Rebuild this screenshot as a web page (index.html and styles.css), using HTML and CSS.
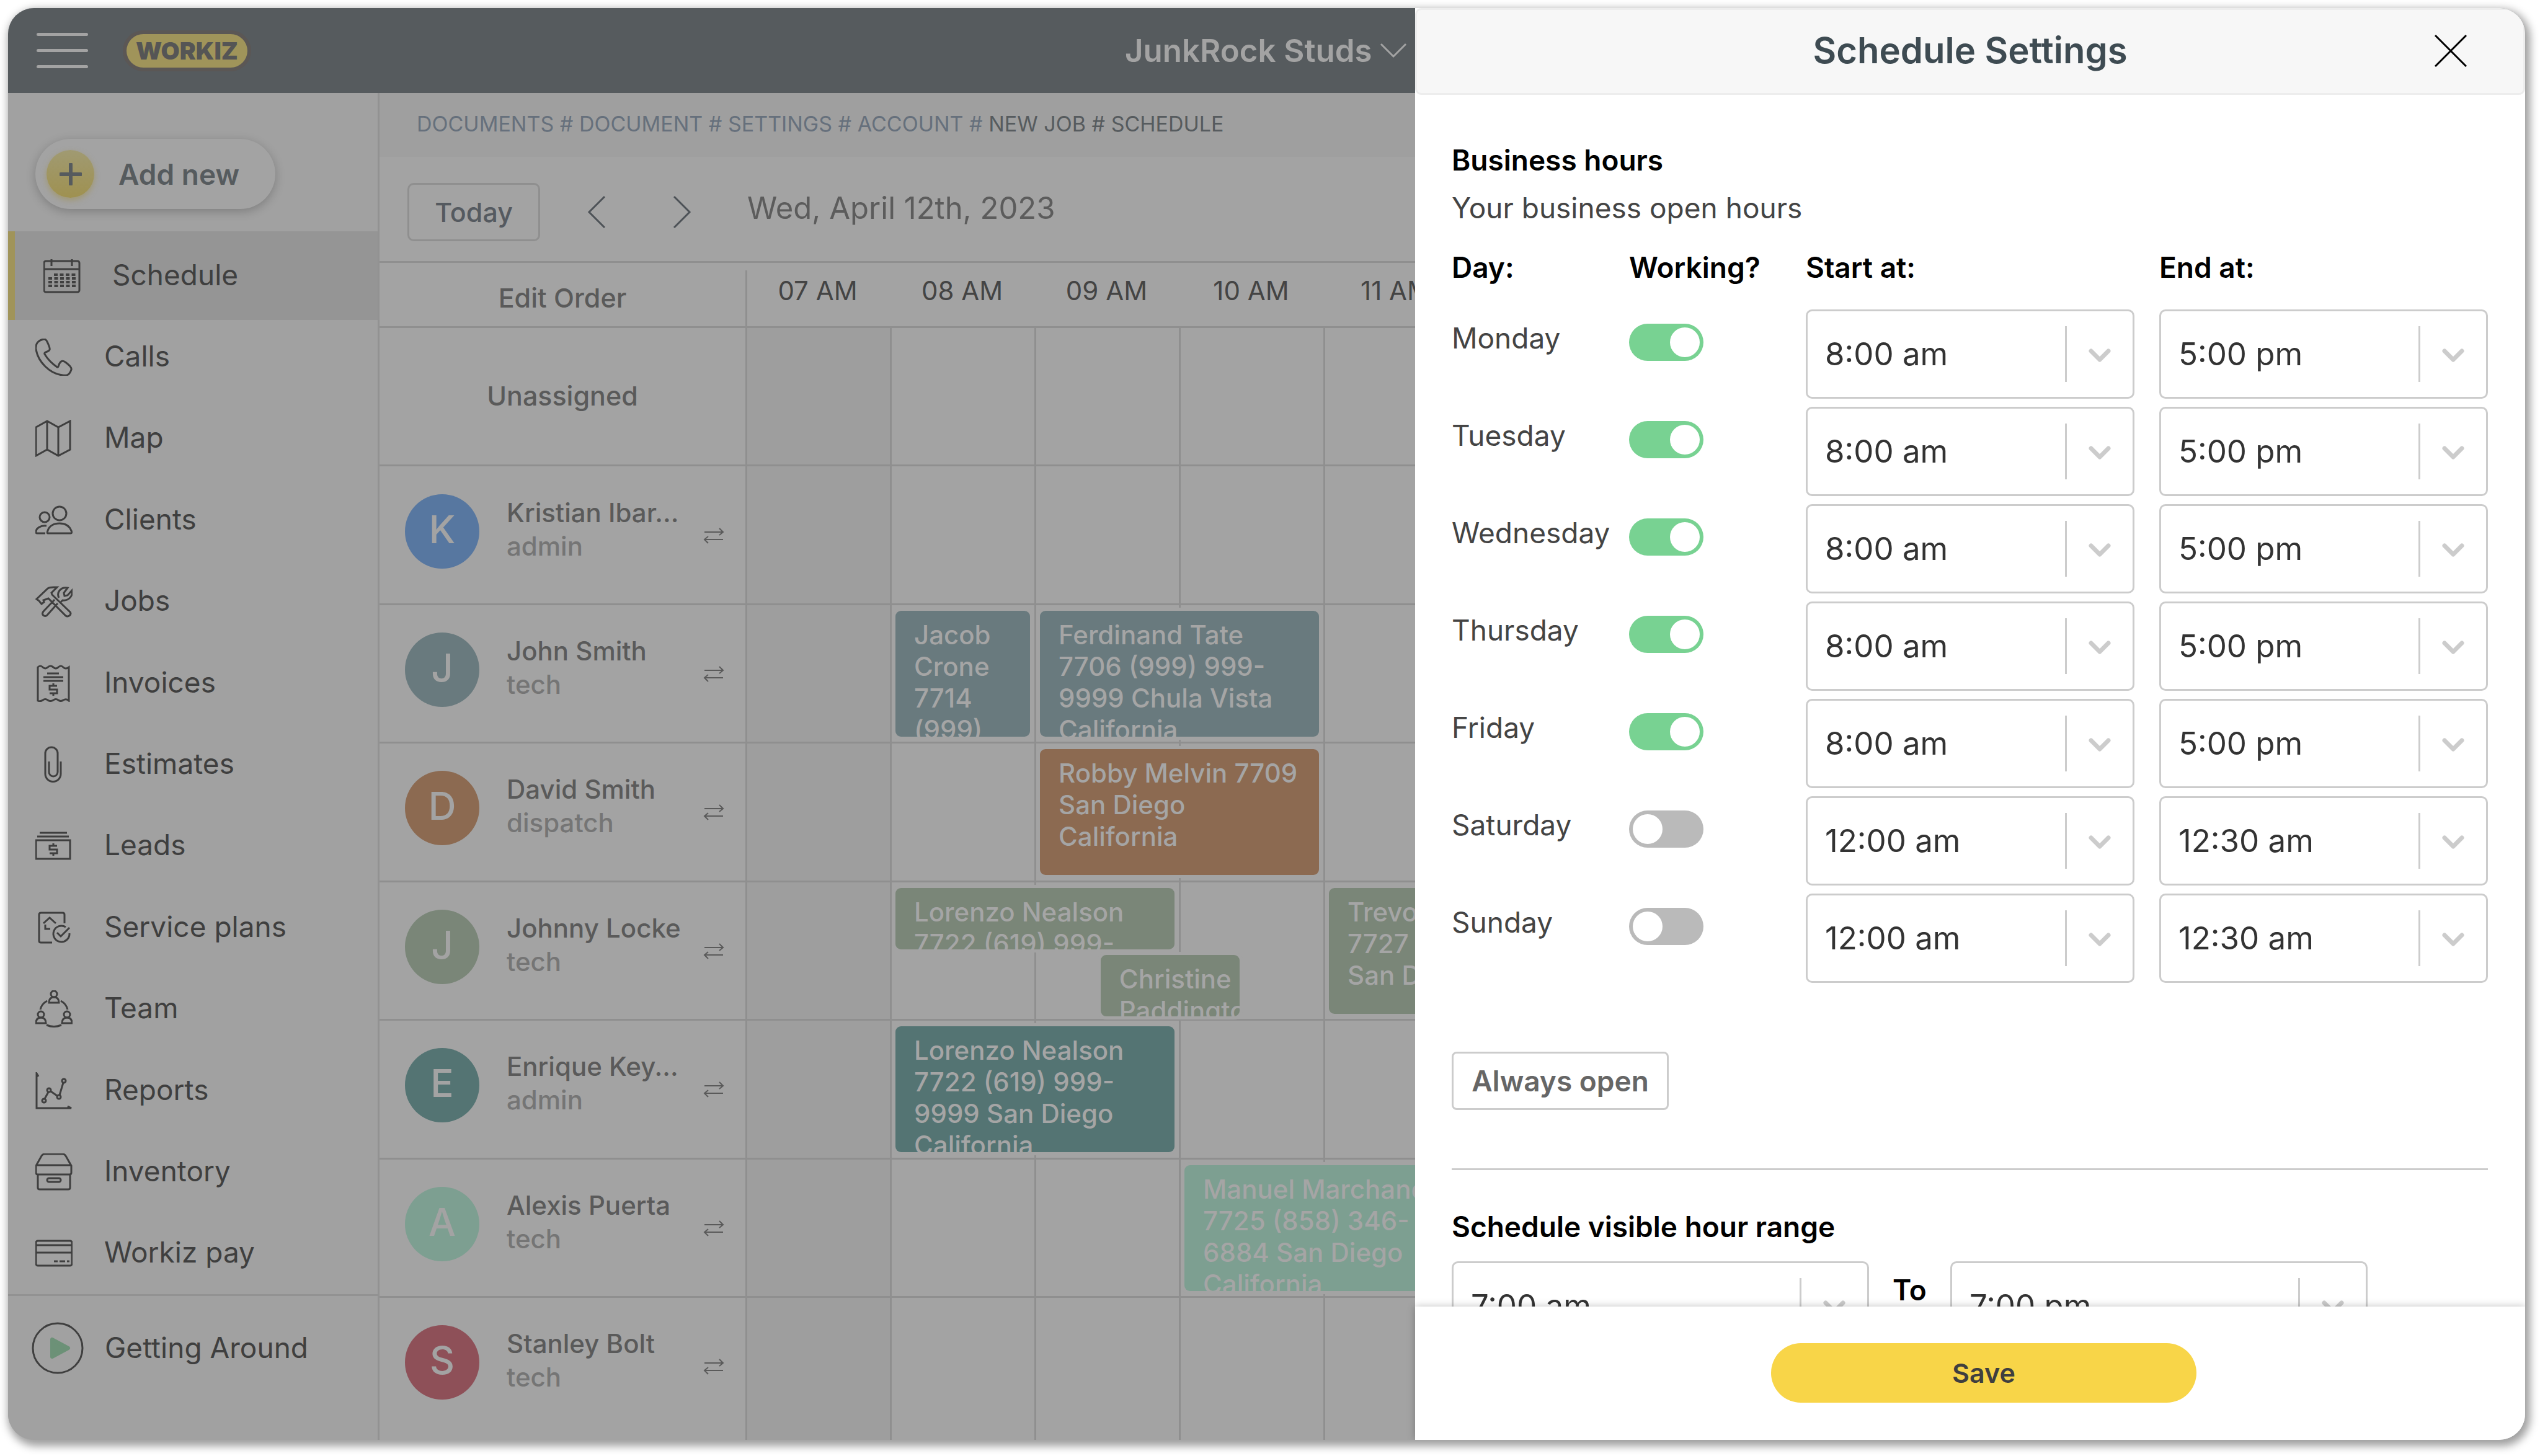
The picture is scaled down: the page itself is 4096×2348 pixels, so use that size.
FILE: index.html
```html
<!DOCTYPE html>
<html lang="en">
<head>
<meta charset="utf-8">
<title>Workiz – Schedule Settings</title>
<link rel="stylesheet" href="styles.css">
</head>
<body>
<svg class="sprite" aria-hidden="true">
  <symbol id="i-chevron" viewBox="0 0 36 24"><path d="M4 5l14 14L32 5" fill="none" stroke="currentColor" stroke-width="7" stroke-linecap="round" stroke-linejoin="round"/></symbol>
  <symbol id="i-swap" viewBox="0 0 34 28"><path d="M2 8h30M26 2l6 6-6 5M32 20H2M8 15l-6 5 6 6" fill="none" stroke="currentColor" stroke-width="2"/></symbol>
  <symbol id="i-dollar" viewBox="0 0 18 22"><path d="M15 5H3v6h12v6H3M9 1v4M9 17v4" fill="none" stroke="currentColor" stroke-width="3"/></symbol>
</svg>

<div class="window">
  <header class="topbar">
    <button class="burger" aria-label="Menu"><span></span><span></span><span></span></button>
    <span class="logo">WORKIZ</span>
    <button class="account">JunkRock Studs
      <svg width="44" height="26" viewBox="0 0 44 26"><path d="M2 2l20 20L42 2" fill="none" stroke="currentColor" stroke-width="3"/></svg>
    </button>
  </header>

  <div class="app">
    <aside class="sidebar">
      <button class="add-new"><span class="plus"><svg width="36" height="36" viewBox="0 0 36 36"><path d="M18 2v32M2 18h32" stroke="currentColor" stroke-width="6" stroke-linecap="round"/></svg></span>Add new</button>
      <nav class="nav">
        <a href="#" class="active"><svg viewBox="0 0 60 60"><path d="M4 6h51a3 3 0 0 1 3 3v44a3 3 0 0 1-3 3H4a3 3 0 0 1-3-3V9a3 3 0 0 1 3-3zM1 19h57M13 3v11M46 3v11"/><path d="M17 28h36M8 34h45M8 40h45M8 46h45" stroke-width="4" stroke-dasharray="6 3.5"/></svg>Schedule</a>
        <a href="#"><svg viewBox="0 0 60 60"><path d="M13 1C4 3 0 9 1 17c3 20 22 40 43 42 7 1 11 0 14-9 1-3-2-6-7-10-6-5-9-5-12 0-2 4-2 7-4 6C28 41 19 32 15 25c-1-2 1-3 4-4 5-2 5-4 3-9-3-8-5-12-9-11z"/></svg>Calls</a>
        <a href="#"><svg viewBox="0 0 60 60"><path d="M1 12l18-10 18 10L56 2v46L37 58 19 48 1 58zM19 2v46M37 12v46"/></svg>Map</a>
        <a href="#"><svg viewBox="0 0 60 60"><circle cx="39" cy="19" r="11"/><circle cx="15" cy="25" r="8"/><path d="M20 51h37c2 0 2-2 1-4-3-8-10-12-19-12s-17 4-19 12c-1 2-1 4 0 4zM18 39C8 38 1 43 1 49q0 2 2 2h13"/></svg>Clients</a>
        <a href="#"><svg viewBox="0 0 60 60"><path d="M2 26L20 9c4-3 9-2 15-2l-9 9 1 3 29 28c3 4-3 9-7 6L21 25l-8 3 1 3-4 3-4-5zM31 27L13 46c-4 5 2 10 6 6l17-19M38 24c-4-8 2-18 14-16l-6 8 1 5 5-1 7-8c2 11-7 17-15 16l-3 3"/></svg>Jobs</a>
        <a href="#"><svg viewBox="0 0 60 60"><path d="M4 4q4-4 8 0 4 4 8 0 4-4 9 0 4 4 8 0 4-4 8 0 4 4 9 0v54q-4-4-9-1-4 3-8 0-4-3-8 0-5 3-9 0-4-3-8 0-4 3-8 1zM19 14h19M13 20h32M13 26h32"/><use href="#i-dollar" x="20" y="29" width="18" height="22"/></svg>Invoices</a>
        <a href="#"><svg viewBox="0 0 60 60"><path d="M41 25v20a12 12 0 0 1-25 0V12a10 10 0 0 1 20 0v30a7 7 0 0 1-14 0V25"/></svg>Estimates</a>
        <a href="#"><svg viewBox="0 0 60 60"><path d="M7 9h44M3 15h51M1 21h55v30H1z"/><use href="#i-dollar" x="20" y="25" width="18" height="22"/></svg>Leads</a>
        <a href="#"><svg viewBox="0 0 60 60"><path d="M27 54H9q-3 0-3-3V9q0-3 3-3h35q3 0 3 3v14M13 23l10-9 10 9M16 25v7h8"/><path d="M49 29a13 13 0 1 0 6 10M35 38l6 6 14-14"/></svg>Service plans</a>
        <a href="#"><svg viewBox="0 0 60 60"><circle cx="30" cy="6" r="5"/><path d="M22 20q0-9 8-9t8 9z"/><circle cx="9" cy="39" r="5"/><path d="M1 53q0-9 8-9t8 9z"/><circle cx="51" cy="39" r="5"/><path d="M43 53q0-9 8-9t8 9zM8 31q2-9 11-14M41 17q9 5 11 14M18 56q12 5 24 0"/></svg>Team</a>
        <a href="#"><svg viewBox="0 0 60 60"><path d="M5 7L2 2v56h56l-6-3"/><circle cx="14" cy="46" r="3"/><circle cx="22" cy="29" r="3"/><circle cx="38" cy="40" r="3"/><circle cx="46" cy="14" r="3"/><path d="M15 43l6-11M25 31l10 7M39 37l6-20"/></svg>Reports</a>
        <a href="#"><svg viewBox="0 0 60 60"><path d="M1 20L10 4q2-3 5-3h29q3 0 5 3l9 16v11q0 3-3 3H4q-3 0-3-3zM1 19h57M4 34v21q0 3 3 3h46q3 0 3-3V34"/><rect x="19" y="40" width="22" height="6" rx="3"/></svg>Inventory</a>
        <a href="#"><svg viewBox="0 0 60 60"><rect x="1" y="10" width="58" height="40" rx="3"/><path d="M1 17h58M1 29h58M30 43h6M39 43h9M51 43h4"/></svg>Workiz pay</a>
      </nav>
      <a href="#" class="getting"><svg width="84" height="84" viewBox="0 0 84 84"><circle cx="42" cy="42" r="40" fill="none" stroke="#3f3f3f" stroke-width="3"/><path d="M33 28v28l26-14z" fill="#6c9177" stroke="#6c9177" stroke-width="6" stroke-linejoin="round"/></svg>Getting Around</a>
    </aside>

    <main class="main">
      <nav class="crumbs"><a href="#">DOCUMENTS</a> # <a href="#">DOCUMENT</a> # <a href="#">SETTINGS</a> # <a href="#">ACCOUNT</a> # <span>NEW JOB # SCHEDULE</span></nav>
      <div class="toolbar">
        <button class="today">Today</button>
        <button class="step" aria-label="Previous day"><svg width="30" height="54" viewBox="0 0 30 54"><path d="M28 2L3 27l25 25"/></svg></button>
        <button class="step" aria-label="Next day"><svg width="30" height="54" viewBox="0 0 30 54"><path d="M2 2l25 25L2 52"/></svg></button>
        <h1 class="date">Wed, April 12th, 2023</h1>
      </div>
      <div class="hours">
        <div class="corner">Edit Order</div>
        <span>07 AM</span><span>08 AM</span><span>09 AM</span><span>10 AM</span><span>11 AM</span><span>12 PM</span>
      </div>
      <div class="rows">
        <div class="row"><div class="staff unassigned">Unassigned</div><div class="lane"></div></div>
        <div class="row"><div class="staff"><span class="avatar blue">K</span><div class="who"><b>Kristian Ibar...</b><i>admin</i></div><svg class="swap"><use href="#i-swap"/></svg></div><div class="lane"></div></div>
        <div class="row"><div class="staff"><span class="avatar slate">J</span><div class="who"><b>John Smith</b><i>tech</i></div><svg class="swap"><use href="#i-swap"/></svg></div><div class="lane">
          <div class="job slate" style="--start:1;--span:1">Jacob Crone 7714 (999)</div>
          <div class="job slate" style="--start:2;--span:2">Ferdinand Tate<br>7706 (999) 999-<br>9999 Chula Vista<br>California</div></div></div>
        <div class="row"><div class="staff"><span class="avatar rust">D</span><div class="who"><b>David Smith</b><i>dispatch</i></div><svg class="swap"><use href="#i-swap"/></svg></div><div class="lane">
          <div class="job rust" style="--start:2;--span:2">Robby Melvin 7709<br>San Diego<br>California</div></div></div>
        <div class="row"><div class="staff"><span class="avatar sage">J</span><div class="who"><b>Johnny Locke</b><i>tech</i></div><svg class="swap"><use href="#i-swap"/></svg></div><div class="lane">
          <div class="job sage half" style="--start:1;--span:2">Lorenzo Nealson<br>7722 (619) 999-</div>
          <div class="job sage half lower" style="--start:2.42;--span:1.03">Christine Paddington</div>
          <div class="job sage" style="--start:4;--span:2">Trevor Burke<br>7727 (619) 999-<br>San Diego</div></div></div>
        <div class="row"><div class="staff"><span class="avatar teal">E</span><div class="who"><b>Enrique Key...</b><i>admin</i></div><svg class="swap"><use href="#i-swap"/></svg></div><div class="lane">
          <div class="job teal" style="--start:1;--span:2">Lorenzo Nealson<br>7722 (619) 999-<br>9999 San Diego<br>California</div></div></div>
        <div class="row"><div class="staff"><span class="avatar mint">A</span><div class="who"><b>Alexis Puerta</b><i>tech</i></div><svg class="swap"><use href="#i-swap"/></svg></div><div class="lane">
          <div class="job mint" style="--start:3;--span:2">Manuel Marchand<br>7725 (858) 346-<br>6884 San Diego<br>California</div></div></div>
        <div class="row"><div class="staff"><span class="avatar red">S</span><div class="who"><b>Stanley Bolt</b><i>tech</i></div><svg class="swap"><use href="#i-swap"/></svg></div><div class="lane"></div></div>
      </div>
    </main>
  </div>

  <section class="drawer" aria-label="Schedule Settings">
    <header class="drawer-head">
      <h2>Schedule Settings</h2>
      <button class="close" aria-label="Close"><svg width="52" height="52" viewBox="0 0 52 52"><path d="M1 1l50 50M51 1L1 51" stroke="#000" stroke-width="3"/></svg></button>
    </header>
    <div class="drawer-body">
      <h3>Business hours</h3>
      <p>Your business open hours</p>
      <table class="days">
        <colgroup><col class="c-day"><col class="c-on"><col class="c-start"><col></colgroup>
        <thead><tr><th>Day:</th><th>Working?</th><th>Start at:</th><th>End at:</th></tr></thead>
        <tbody>
          <tr><th><label for="d1">Monday</label></th><td><input type="checkbox" id="d1" class="toggle" checked></td><td><div class="pick"><select aria-label="Monday start"><option>8:00 am</option></select><svg><use href="#i-chevron"/></svg></div></td><td><div class="pick"><select aria-label="Monday end"><option>5:00 pm</option></select><svg><use href="#i-chevron"/></svg></div></td></tr>
          <tr><th><label for="d2">Tuesday</label></th><td><input type="checkbox" id="d2" class="toggle" checked></td><td><div class="pick"><select aria-label="Tuesday start"><option>8:00 am</option></select><svg><use href="#i-chevron"/></svg></div></td><td><div class="pick"><select aria-label="Tuesday end"><option>5:00 pm</option></select><svg><use href="#i-chevron"/></svg></div></td></tr>
          <tr><th><label for="d3">Wednesday</label></th><td><input type="checkbox" id="d3" class="toggle" checked></td><td><div class="pick"><select aria-label="Wednesday start"><option>8:00 am</option></select><svg><use href="#i-chevron"/></svg></div></td><td><div class="pick"><select aria-label="Wednesday end"><option>5:00 pm</option></select><svg><use href="#i-chevron"/></svg></div></td></tr>
          <tr><th><label for="d4">Thursday</label></th><td><input type="checkbox" id="d4" class="toggle" checked></td><td><div class="pick"><select aria-label="Thursday start"><option>8:00 am</option></select><svg><use href="#i-chevron"/></svg></div></td><td><div class="pick"><select aria-label="Thursday end"><option>5:00 pm</option></select><svg><use href="#i-chevron"/></svg></div></td></tr>
          <tr><th><label for="d5">Friday</label></th><td><input type="checkbox" id="d5" class="toggle" checked></td><td><div class="pick"><select aria-label="Friday start"><option>8:00 am</option></select><svg><use href="#i-chevron"/></svg></div></td><td><div class="pick"><select aria-label="Friday end"><option>5:00 pm</option></select><svg><use href="#i-chevron"/></svg></div></td></tr>
          <tr><th><label for="d6">Saturday</label></th><td><input type="checkbox" id="d6" class="toggle"></td><td><div class="pick"><select aria-label="Saturday start"><option>12:00 am</option></select><svg><use href="#i-chevron"/></svg></div></td><td><div class="pick"><select aria-label="Saturday end"><option>12:30 am</option></select><svg><use href="#i-chevron"/></svg></div></td></tr>
          <tr><th><label for="d7">Sunday</label></th><td><input type="checkbox" id="d7" class="toggle"></td><td><div class="pick"><select aria-label="Sunday start"><option>12:00 am</option></select><svg><use href="#i-chevron"/></svg></div></td><td><div class="pick"><select aria-label="Sunday end"><option>12:30 am</option></select><svg><use href="#i-chevron"/></svg></div></td></tr>
        </tbody>
      </table>
      <button class="always">Always open</button>
      <hr>
      <h3>Schedule visible hour range</h3>
      <div class="range">
        <div class="pick"><select aria-label="Visible from"><option>7:00 am</option></select><svg><use href="#i-chevron"/></svg></div>
        <span>To</span>
        <div class="pick"><select aria-label="Visible to"><option>7:00 pm</option></select><svg><use href="#i-chevron"/></svg></div>
      </div>
    </div>
    <footer class="drawer-foot"><button class="save">Save</button></footer>
  </section>
</div>
</body>
</html>
```

FILE: styles.css
```css
* { box-sizing: border-box; }
body {
  margin: 0;
  padding: 13px 24px 26px 13px;
  height: 100vh;
  background: #fff;
  font-family: Inter, "Liberation Sans", sans-serif;
  font-size: 46px;
  color: #444;
}
button, select { font: inherit; color: inherit; background: none; border: 0; padding: 0; margin: 0; }
a { color: inherit; text-decoration: none; }
h1, h2, h3, p { margin: 0; }
.sprite { position: absolute; width: 0; height: 0; }

.window {
  position: relative;
  display: flex;
  flex-direction: column;
  height: 100%;
  border-radius: 42px;
  overflow: hidden;
  background: #a3a3a3;
  box-shadow: 4px 6px 14px 4px rgba(0, 0, 0, .38);
}

/* top bar */
.topbar {
  display: flex;
  align-items: center;
  height: 137px;
  padding-left: 46px;
  background: #565b5e;
}
.burger { display: flex; flex-direction: column; gap: 21px; width: 83px; }
.burger span { height: 5px; border-radius: 3px; background: #a3a3a3; }
.logo {
  margin-left: 62px;
  width: 195px;
  line-height: 54px;
  border-radius: 27px;
  background: #a0945a;
  box-shadow: 0 0 0 6px #5b5755;
  color: #555;
  font-weight: 900;
  font-size: 39px;
  text-align: center;
}
.account {
  display: flex;
  align-items: center;
  gap: 12px;
  margin-left: 1415px;
  font-size: 51px;
  font-weight: 600;
  color: #a3a3a3;
  white-space: nowrap;
}

.app { flex: 1; display: flex; min-height: 0; }

/* sidebar */
.sidebar {
  flex: none;
  display: flex;
  flex-direction: column;
  width: 599px;
  border-right: 3px solid #929292;
  background: #a1a1a1;
  color: #3f3f3f;
}
.add-new {
  display: flex;
  align-items: center;
  gap: 39px;
  width: 387px;
  height: 113px;
  margin: 74px 0 42px 44px;
  padding-left: 18px;
  border-radius: 57px;
  background: #a3a3a3;
  box-shadow: 0 4px 16px rgba(0, 0, 0, .22);
  color: #565b5e;
  font-weight: 600;
}
.plus {
  display: flex;
  align-items: center;
  justify-content: center;
  width: 77px;
  height: 77px;
  border-radius: 50%;
  background: linear-gradient(#a09a72, #9f9150);
  box-shadow: 0 4px 10px rgba(160, 145, 80, .6);
}
.nav { flex: 1; display: flex; flex-direction: column; }
.nav a {
  flex: 1;
  display: flex;
  align-items: center;
  gap: 51px;
  padding: 0 0 4px 44px;
}
.nav svg { flex: none; width: 60px; height: 60px; margin-top: 4px; fill: none; stroke: currentColor; stroke-width: 3; color: #3f3f3f; }
.nav .active {
  margin: -6px 0;
  padding: 6px 0 10px 46px;
  border-left: 11px solid #a0945a;
  background: #959595;
}
.getting {
  display: flex;
  align-items: flex-start;
  gap: 34px;
  height: 235px;
  padding: 42px 0 0 38px;
  border-top: 3px solid #929292;
  line-height: 82px;
}

/* calendar */
.main { flex: 1; display: flex; flex-direction: column; min-width: 0; overflow: hidden; --hour: 233px; }
.crumbs {
  height: 103px;
  padding-left: 60px;
  background: #9f9f9f;
  color: #66707c;
  font-size: 34px;
  line-height: 100px;
  white-space: pre;
}
.crumbs span { color: #565b5e; }
.toolbar {
  display: flex;
  align-items: center;
  height: 171px;
  padding: 10px 0 0 45px;
  border-bottom: 3px solid #8f8f8f;
}
.today {
  width: 214px;
  height: 94px;
  border: 3px solid #8f8f8f;
  border-radius: 10px;
  color: #555a60;
  font-size: 43px;
  font-weight: 500;
}
.step { margin-left: 76px; }
.step + .step { margin-left: 108px; }
.step svg { display: block; fill: none; stroke: #4d5257; stroke-width: 3; }
.date { margin-left: 90px; padding-bottom: 14px; font-size: 49px; font-weight: 400; color: #5c5c5c; white-space: nowrap; }
.hours { display: flex; height: 105px; border-bottom: 3px solid #8f8f8f; color: #444; font-size: 42px; }
.hours span { flex: none; width: var(--hour); padding-right: 6px; line-height: 90px; text-align: center; }
.corner {
  flex: none;
  width: 593px;
  margin-top: 12px;
  border-right: 3px solid #8f8f8f;
  line-height: 88px;
  text-align: center;
  font-size: 43px;
  font-weight: 500;
  color: #5a5a5a;
}
.rows { flex: 1; display: flex; flex-direction: column; font-size: 42px; }
.row { flex: 1; display: flex; border-bottom: 3px solid #8f8f8f; }
.row:last-child { padding-bottom: 0; border-bottom: 0; flex: 0 0 229px; }
.row:last-child .staff { padding-bottom: 20px; }
.staff {
  flex: none;
  display: flex;
  align-items: center;
  width: 593px;
  padding: 0 34px 12px 41px;
  border-right: 3px solid #8f8f8f;
}
.unassigned { justify-content: center; padding: 0 0 2px; font-size: 43px; font-weight: 500; color: #5a5a5a; }
.avatar {
  flex: none;
  width: 120px;
  height: 120px;
  border-radius: 50%;
  color: #a3a3a3;
  font-size: 62px;
  font-weight: 500;
  line-height: 114px;
  text-align: center;
}
.who { flex: 1; margin: 0 0 6px 44px; line-height: 54px; }
.who b, .who i { display: block; font-style: normal; font-weight: 500; white-space: nowrap; }
.who b { color: #5a5a5a; }
.who i { color: #757575; }
.swap { flex: none; width: 34px; height: 28px; margin-top: 14px; color: #5a5a5a; }
.lane {
  position: relative;
  flex: 1;
  background:
    repeating-linear-gradient(to right, transparent 0 230px, #8f8f8f 230px 233px),
    linear-gradient(#9e9e9e, #9e9e9e) 0 0 / 230px 100% no-repeat;
}
.job {
  position: absolute;
  top: 9px;
  left: calc(var(--start) * var(--hour) + 6px);
  width: calc(var(--span) * var(--hour) - 16px);
  height: 203px;
  padding: 13px 4px 0 30px;
  border-radius: 9px;
  overflow: hidden;
  box-shadow: 0 0 0 5px #a3a3a3;
  color: #a5a5a5;
  font-weight: 500;
  line-height: 51px;
}
.half { height: 99px; }
.lower { top: 117px; }
.blue { background: #5777a0; }
.slate { background: #697a7e; }
.rust { background: #8c6a51; }
.sage { background: #7a8678; }
.teal { background: #547473; }
.mint { background: #7d9f91; }
.red { background: #8e5058; }

/* settings drawer */
.drawer {
  position: absolute;
  inset: 0 0 0 auto;
  display: flex;
  flex-direction: column;
  width: 44.1%;
  background: #fff;
}
.drawer-head {
  flex: none;
  display: flex;
  align-items: center;
  justify-content: center;
  position: relative;
  height: 140px;
  padding-bottom: 4px;
  border: 3px solid #ededed;
  border-radius: 10px;
  background: #f7f7f7;
}
.drawer-head h2 { font-size: 58px; font-weight: 600; color: #3e4b52; }
.close { position: absolute; right: 91px; top: 40px; }
.close svg { display: block; }
.drawer-body { flex: 1; min-height: 0; overflow: hidden; padding: 66px 60px 0 59px; }
.drawer-body h3 { font-size: 46px; font-weight: 600; line-height: 78px; color: #000; }
.drawer-body p { line-height: 76px; }
.days { width: 100%; table-layout: fixed; border-collapse: collapse; }
.c-day { width: 286px; }
.c-on { width: 285px; }
.c-start { width: 570px; }
.days th, .days td { padding: 0; vertical-align: top; text-align: left; font-weight: 400; }
.days thead th { height: 126px; padding-top: 20px; line-height: 76px; font-weight: 600; color: #000; }
.days tbody tr { height: 157px; }
.days tbody th { padding-top: 19px; line-height: 54px; }
.toggle {
  appearance: none;
  display: block;
  width: 120px;
  height: 60px;
  margin: 23px 0 0;
  padding: 6px;
  border-radius: 30px;
  background: #bababa;
}
.toggle::before { content: ""; display: block; width: 48px; height: 48px; border-radius: 50%; background: #fff; }
.toggle:checked { background: #78d292; }
.toggle:checked::before { margin-left: auto; }
.pick { position: relative; width: 530px; }
.pick select {
  appearance: none;
  display: block;
  width: 100%;
  height: 144px;
  padding: 0 0 2px 28px;
  border: 3px solid #ccc;
  border-radius: 10px;
  font-size: 51px;
  color: #333;
}
.pick::after { content: ""; position: absolute; right: 109px; top: 27px; width: 3px; height: 90px; background: #ccc; }
.pick svg { position: absolute; right: 38px; top: 62px; width: 36px; height: 24px; color: #ccc; }
.always {
  display: block;
  width: 350px;
  height: 94px;
  margin-top: 98px;
  border: 3px solid #ccc;
  border-radius: 8px;
  color: #666;
  font-weight: 600;
}
hr { height: 3px; margin: 94px 0 52px; border: 0; background: #ccc; }
.range { display: flex; margin-top: 17px; }
.range .pick { width: 673px; }
.range span { width: 131px; line-height: 92px; text-align: center; font-weight: 600; color: #000; }
.drawer-foot {
  flex: none;
  display: flex;
  justify-content: center;
  height: 215px;
  padding: 59px 0 0 44px;
  position: relative;
  background: #fff;
  box-shadow: 0 0 12px rgba(0, 0, 0, .25);
}
.save { width: 686px; height: 96px; border-radius: 48px; background: #f8d548; font-size: 43px; font-weight: 600; color: #3f3f3f; }
```
